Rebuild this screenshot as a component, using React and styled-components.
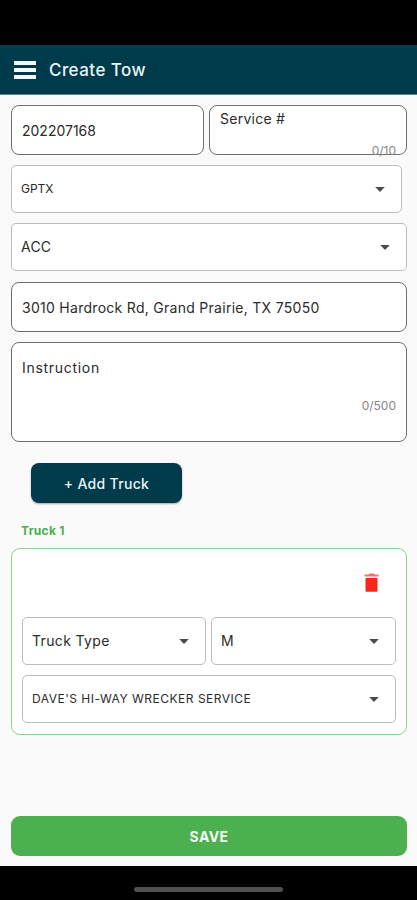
import React from "react";
import styled, { createGlobalStyle } from "styled-components";

export default function App() {
  return (
    <Screen>
      <GlobalStyle />
      <StatusBar />
      <Header>
        <Burger>
          <BurgerLine />
          <BurgerLine />
          <BurgerLine />
        </Burger>
        <Title>Create Tow</Title>
      </Header>

      <Content>
        <TopRow>
          <InputBox>
            <Value>202207168</Value>
          </InputBox>
          <ServiceBox>
            <Value $spacing="0.25px">Service #</Value>
            <Counter $tight>0/10</Counter>
          </ServiceBox>
        </TopRow>
        <Select label="GPTX" $small $short />
        <Select label="ACC" $spacing="0.2px" />
        <AddressBox>
          <Value $spacing="0.28px">3010 Hardrock Rd, Grand Prairie, TX 75050</Value>
        </AddressBox>
        <InstructionBox>
          <Value $spacing="0.7px">Instruction</Value>
          <Counter>0/500</Counter>
        </InstructionBox>

        <AddButton>+ Add Truck</AddButton>
        <TruckHeading>Truck 1</TruckHeading>
        <TruckCard>
          <DeleteButton aria-label="Delete truck">
            <TrashIcon />
          </DeleteButton>
          <TruckRow>
            <Select label="Truck Type" $spacing="0.35px" />
            <Select label="M" />
          </TruckRow>
          <Select label="DAVE'S HI-WAY WRECKER SERVICE" $small $spacing="0.5px" />
        </TruckCard>

        <SaveButton>SAVE</SaveButton>
      </Content>

      <NavBar>
        <HomePill />
      </NavBar>
    </Screen>
  );
}

function Select({ label, $small, $short, $spacing }) {
  return (
    <SelectBox $short={$short}>
      <Value $small={$small} $spacing={$spacing}>
        {label}
      </Value>
      <Arrow viewBox="0 0 10 5">
        <path d="M0.2 0h9.6L5 5z" fill="#4b4b4b" />
      </Arrow>
    </SelectBox>
  );
}

function TrashIcon() {
  return (
    <svg width="15" height="19" viewBox="0 0 15 19">
      <path d="M0.5 1.6h4L5.4 0.5h4.2l0.9 1.1h4v1.8h-14z" fill="#f77068" />
      <path d="M1.5 5h12v12.8a1 1 0 0 1-1 1H2.5a1 1 0 0 1-1-1z" fill="#f5281c" />
    </svg>
  );
}

const GlobalStyle = createGlobalStyle`
  * {
    box-sizing: border-box;
  }
  body {
    margin: 0;
    background: #000;
    font-family: Inter, "Open Sans", sans-serif;
  }
  button {
    font-family: inherit;
    border: 0;
    padding: 0;
  }
`;

const Screen = styled.div`
  display: flex;
  flex-direction: column;
  width: 417px;
  height: 900px;
  overflow: hidden;
  background: #fafafa;
`;

const StatusBar = styled.div`
  height: 45px;
  flex: none;
  background: #000;
`;

const Header = styled.header`
  display: flex;
  align-items: center;
  gap: 13px;
  height: 50px;
  flex: none;
  padding-left: 14px;
  background: #003b4b;
  border-bottom: 1px solid #5b7f8a;
`;

const Burger = styled.div`
  display: flex;
  flex-direction: column;
  gap: 3px;
  width: 22px;
  padding-top: 1px;
`;

const BurgerLine = styled.span`
  height: 4px;
  background: #f4f8f9;
`;

const Title = styled.h1`
  margin: 0;
  color: #eaf4f6;
  font-size: 17px;
  font-weight: 500;
  letter-spacing: 0.45px;
`;

const Content = styled.main`
  display: flex;
  flex-direction: column;
  flex: 1;
  padding: 10px 10px 10px 11px;
  gap: 10px;
`;

const TopRow = styled.div`
  display: grid;
  grid-template-columns: 193px 198px;
  justify-content: space-between;
`;

const InputBox = styled.div`
  display: flex;
  align-items: center;
  height: 50px;
  padding: 2px 10px 0;
  background: #fff;
  border: 1px solid #6e6e6e;
  border-radius: 8px;
`;

const ServiceBox = styled(InputBox)`
  flex-direction: column;
  align-items: flex-start;
  justify-content: space-between;
  padding-top: 4px;
`;

const AddressBox = styled(InputBox)`
  margin-top: 1px;
`;

const InstructionBox = styled(InputBox)`
  flex-direction: column;
  align-items: flex-start;
  height: 100px;
  padding-top: 16px;
  gap: 21px;
`;

const Value = styled.span`
  color: #2b2b2b;
  font-size: ${(pr) => (pr.$small ? "12px" : "14px")};
  line-height: 18px;
  letter-spacing: ${(pr) => pr.$spacing || "0px"};
  white-space: nowrap;
`;

const Counter = styled.span`
  align-self: flex-end;
  color: #858585;
  font-size: 12px;
  line-height: 16px;
  margin-bottom: ${(pr) => (pr.$tight ? "-5px" : "0")};
`;

const SelectBox = styled.div`
  display: flex;
  align-items: center;
  justify-content: space-between;
  height: 48px;
  margin-right: ${(pr) => (pr.$short ? "5px" : "0")};
  padding: 0 16px 0 9px;
  background: #fff;
  border: 1px solid #bdbdbd;
  border-radius: 5px;
`;

const Arrow = styled.svg`
  width: 10px;
  height: 5px;
`;

const AddButton = styled.button`
  width: 151px;
  height: 40px;
  margin: 11px 0 0 20px;
  color: #eaf4f6;
  background: #003b4b;
  border-radius: 8px;
  box-shadow: 0 1px 2px rgba(0, 0, 0, 0.35);
  font-size: 14px;
  font-weight: 500;
  letter-spacing: 0.3px;
`;

const TruckHeading = styled.h2`
  margin: 10px 0 0 10px;
  color: #4caf50;
  font-size: 12px;
  line-height: 15px;
  font-weight: 700;
  letter-spacing: 0.3px;
`;

const TruckCard = styled.section`
  display: flex;
  flex-direction: column;
  gap: 10px;
  height: 187px;
  padding: 24px 10px 10px;
  background: #fff;
  border: 1px solid #8fcf93;
  border-radius: 9px;
`;

const DeleteButton = styled.button`
  align-self: flex-end;
  width: 15px;
  height: 19px;
  margin: 0 17px 15px 0;
  background: none;

  svg {
    display: block;
  }
`;

const TruckRow = styled.div`
  display: grid;
  grid-template-columns: 184px 185px;
  justify-content: space-between;
`;

const SaveButton = styled.button`
  height: 40px;
  margin-top: auto;
  color: #f5fff5;
  background: #4caf50;
  border-radius: 9px;
  font-size: 14px;
  font-weight: 700;
  letter-spacing: 0.4px;
`;

const NavBar = styled.footer`
  display: flex;
  justify-content: center;
  height: 34px;
  flex: none;
  padding-top: 21px;
  background: #000;
`;

const HomePill = styled.div`
  width: 149px;
  height: 5px;
  border-radius: 3px;
  background: #505050;
`;
